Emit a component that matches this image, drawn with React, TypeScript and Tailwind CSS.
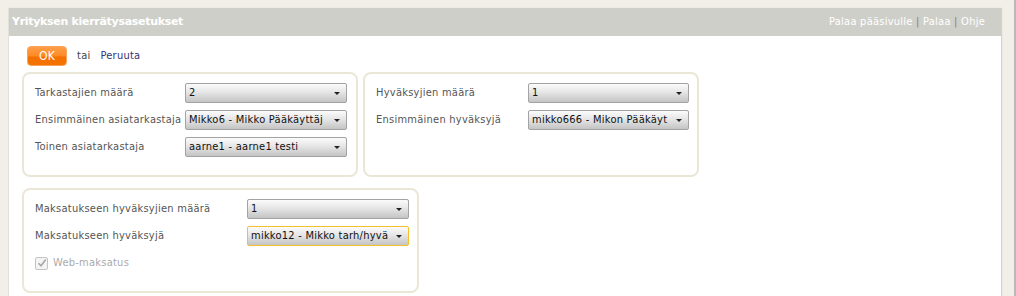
import React from "react";

type Row = { label: string; value: string; highlight?: boolean };

const font = "font-['DejaVu_Sans_Condensed','DejaVu_Sans',sans-serif] font-stretch-condensed tracking-[0.25px]";

function FakeSelect({ value, width, highlight }: { value: string; width: string; highlight?: boolean }) {
  return (
    <div
      className={`${width} relative flex h-[20px] items-center rounded-[2px] border pl-[3px] pr-[15px] text-[11px] text-[#111] bg-[linear-gradient(to_bottom,#fbfbfb_0%,#e6e6e6_45%,#c4c4c4_100%)] ${
        highlight ? "border-[#f5c02a]" : "border-[#a3a3a3]"
      }`}
    >
      <span className="min-w-0 flex-1 overflow-hidden whitespace-nowrap">{value}</span>
      <span className="absolute right-[6px] top-[8px] h-0 w-0 border-x-[3px] border-t-[3px] border-x-transparent border-t-[#222]" />
    </div>
  );
}

function Fieldset({
  rows,
  width,
  selectLeft,
  selectWidth,
  children,
}: {
  rows: Row[];
  width: string;
  selectLeft: string;
  selectWidth: string;
  children?: React.ReactNode;
}) {
  return (
    <div className={`${width} h-[105px] rounded-[8px] border-2 border-[#ebe7d6] bg-white pl-[11px] pt-[9px]`}>
      {rows.map((r) => (
        <div key={r.label} className="mb-[7px] flex items-start">
          <div className={`${selectLeft} shrink-0 whitespace-nowrap pt-[2px] text-[11px] text-[#555]`}>{r.label}</div>
          <FakeSelect value={r.value} width={selectWidth} highlight={r.highlight} />
        </div>
      ))}
      {children}
    </div>
  );
}

export default function App() {
  return (
    <div className={`${font} flex h-[296px] w-[1016px] overflow-hidden bg-[#f2efe9]`}>
      <div className="ml-[8px] mt-[8px] flex w-[993px] flex-col border-l border-[#e2e0da] bg-white shadow-[1px_0_1px_#d6d3cc]">
        {/* header */}
        <div className="flex h-[28px] items-center justify-between bg-[#cfcfca] pl-[3px] pr-[16px]">
          <span className="font-['DejaVu_Sans',sans-serif] font-stretch-normal text-[11px] font-bold tracking-[-0.3px] text-white">
            Yrityksen kierrätysasetukset
          </span>
          <span className="text-[11px] text-white">
            Palaa pääsivulle <span className="text-[#8d7d6d]">|</span> Palaa{" "}
            <span className="text-[#8d7d6d]">|</span> Ohje
          </span>
        </div>

        <div className="pl-[13px] pt-[10px]">
          <div className="flex items-center">
            <button className="ml-[5px] h-[20px] w-[40px] rounded-[4px] border border-[#f4a35a] bg-[linear-gradient(to_bottom,#ff9d47_0%,#ff8a25_50%,#f46f00_55%,#f47400_100%)] text-[12px] text-white">
              OK
            </button>
            <span className="ml-[10px] text-[11px] text-[#444]">tai</span>
            <span className="ml-[10px] text-[11px] text-[#333377]">Peruuta</span>
          </div>

          <div className="mt-[6px] flex gap-[5px]">
            <Fieldset
              width="w-[336px]"
              selectLeft="w-[150px]"
              selectWidth="w-[162px]"
              rows={[
                { label: "Tarkastajien määrä", value: "2" },
                { label: "Ensimmäinen asiatarkastaja", value: "Mikko6 - Mikko Pääkäyttäj" },
                { label: "Toinen asiatarkastaja", value: "aarne1 - aarne1 testi" },
              ]}
            />
            <Fieldset
              width="w-[336px]"
              selectLeft="w-[152px]"
              selectWidth="w-[161px]"
              rows={[
                { label: "Hyväksyjien määrä", value: "1" },
                { label: "Ensimmäinen hyväksyjä", value: "mikko666 - Mikon Pääkäyt" },
              ]}
            />
          </div>

          <div className="mt-[11px]">
            <Fieldset
              width="w-[397px]"
              selectLeft="w-[212px]"
              selectWidth="w-[162px]"
              rows={[
                { label: "Maksatukseen hyväksyjien määrä", value: "1" },
                { label: "Maksatukseen hyväksyjä", value: "mikko12 - Mikko tarh/hyvä", highlight: true },
              ]}
            >
              <label className="mt-[9px] flex items-center gap-[5px] text-[11px] text-[#aaa]">
                <span className="flex h-[13px] w-[13px] items-center justify-center rounded-[2px] border border-[#c4c4c4] bg-[#f4f4f4]">
                  <svg width="10" height="10" viewBox="0 0 10 10">
                    <path d="M1.5 5.2 L4 7.8 L8.8 1.5" fill="none" stroke="#a8a8a8" strokeWidth="1.6" />
                  </svg>
                </span>
                Web-maksatus
              </label>
            </Fieldset>
          </div>
        </div>
      </div>
      <div className="ml-auto w-[2px] bg-[#b8b8b8]" />
    </div>
  );
}
